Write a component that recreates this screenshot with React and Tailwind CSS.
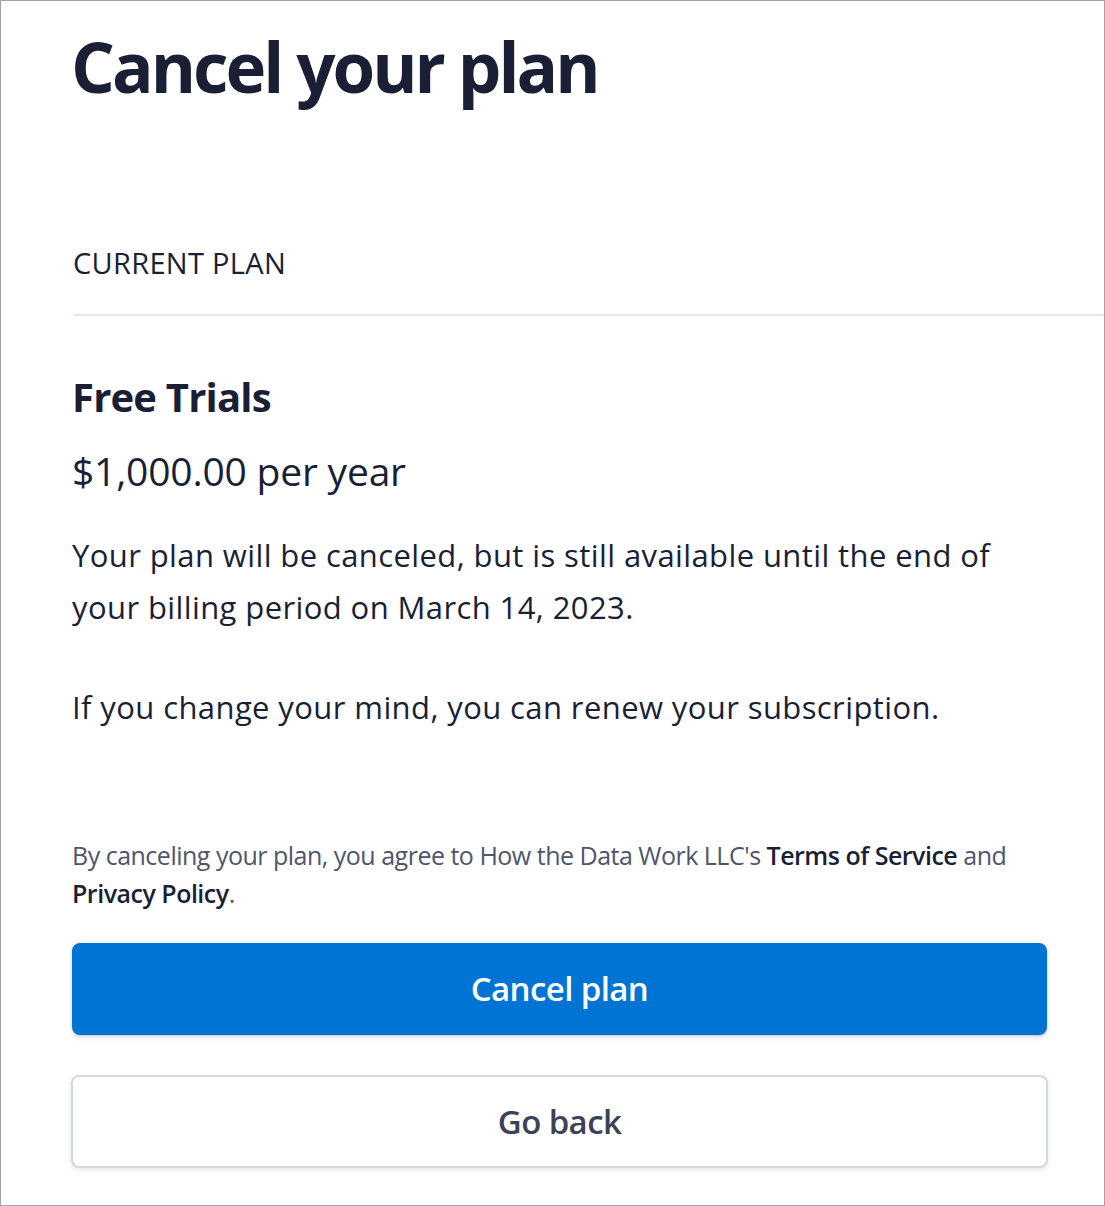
export default function App() {
  const font = { fontFamily: '"Open Sans", "Noto Sans", sans-serif' };
  return (
    <div
      className="w-[1105px] h-[1206px] border border-[#a3a3a3] bg-white overflow-hidden text-[#1a1f36]"
      style={font}
    >
      <div className="pl-[71px]">
        <h1 className="pt-[23px] -ml-[1px] text-[69px] leading-[84px] font-bold tracking-[-3px] text-[#1a1f36]">
          Cancel your plan
        </h1>
        <div className="mt-[135px] pl-[1px] text-[29px] leading-[40px] tracking-[0.3px] text-[#1a1f36]">
          CURRENT PLAN
        </div>
        <div className="mt-[31px] ml-[1px] h-[2px] bg-[#e3e8ee]" />
        <div className="w-[975px]">
          <div className="mt-[56px] text-[40px] leading-[50px] font-bold tracking-[-0.8px] text-[#1a1f36]">
            Free Trials
          </div>
          <div className="mt-[24px] text-[39px] leading-[50px] tracking-[-0.2px] text-[#1a1f36]">
            $1,000.00 per year
          </div>
          <p className="mt-[33px] w-[960px] text-[31px] leading-[52px] tracking-[0.4px] text-[#1a1f36]">
            Your plan will be canceled, but is still available until the end of your billing period on March 14, 2023.
          </p>
          <p className="mt-[48px] text-[31px] leading-[52px] tracking-[0.4px] text-[#1a1f36]">
            If you change your mind, you can renew your subscription.
          </p>
          <p className="mt-[103px] text-[25px] leading-[38px] tracking-[-0.5px] text-[#4f566b]">
            By canceling your plan, you agree to How the Data Work LLC's{" "}
            <span className="font-semibold text-[#1a1f36]">Terms of Service</span> and{" "}
            <span className="font-semibold text-[#1a1f36]">Privacy Policy</span>.
          </p>
          <button className="mt-[31px] w-full h-[92px] rounded-[8px] bg-[#0074d4] text-white text-[33px] font-semibold tracking-[-0.6px] shadow-[0_2px_5px_rgba(60,66,87,0.2),0_1px_1px_rgba(0,0,0,0.1)] flex items-center justify-center">
            Cancel plan
          </button>
          <button className="mt-[40px] -ml-[1px] w-[977px] h-[93px] rounded-[8px] bg-white border-2 border-[#d5d7de] text-[#3c4257] text-[33px] font-semibold tracking-[-0.6px] shadow-[0_2px_5px_rgba(60,66,87,0.12)] flex items-center justify-center">
            Go back
          </button>
        </div>
      </div>
    </div>
  );
}
